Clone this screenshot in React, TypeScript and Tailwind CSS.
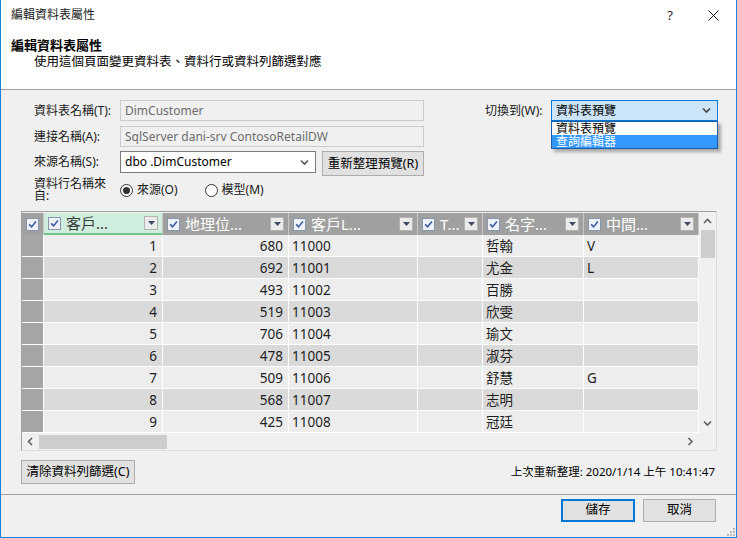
import React from 'react'

const rows = [
  ['1', '680', '11000', '', '哲翰', 'V'],
  ['2', '692', '11001', '', '尤金', 'L'],
  ['3', '493', '11002', '', '百勝', ''],
  ['4', '519', '11003', '', '欣雯', ''],
  ['5', '706', '11004', '', '瑜文', ''],
  ['6', '478', '11005', '', '淑芬', ''],
  ['7', '509', '11006', '', '舒慧', 'G'],
  ['8', '568', '11007', '', '志明', ''],
  ['9', '425', '11008', '', '冠廷', ''],
]

// column widths (incl. 1px white divider)
const cols = [
  { title: '客戶...', w: 'w-[119px]', align: 'right' },
  { title: '地理位...', w: 'w-[126px]', align: 'right' },
  { title: '客戶L...', w: 'w-[129px]', align: 'left' },
  { title: 'T...', w: 'w-[65px]', align: 'left' },
  { title: '名字...', w: 'w-[101px]', align: 'left' },
  { title: '中間...', w: 'w-[115px]', align: 'left' },
]

function Check() {
  return (
    <span className="flex h-[13px] w-[13px] shrink-0 items-center justify-center border border-[#8797ad] bg-[#eef2f8]">
      <svg width="9" height="9" viewBox="0 0 9 9">
        <path d="M1.2 4.4 L3.6 6.9 L7.9 1.6" fill="none" stroke="#3a5ca3" strokeWidth="1.6" />
      </svg>
    </span>
  )
}

function FilterBtn() {
  return (
    <span className="flex h-[14px] w-[14px] shrink-0 items-center justify-center border border-[#b3b3b3] bg-[#ebebeb]">
      <svg width="7" height="4" viewBox="0 0 7 4">
        <path d="M0 0 H7 L3.5 4 Z" fill="#3c4a66" />
      </svg>
    </span>
  )
}

function Chevron({ dir, color = '#606060' }: { dir: 'up' | 'down' | 'left' | 'right'; color?: string }) {
  const d =
    dir === 'up'
      ? 'M1 5 L4.5 1.5 L8 5'
      : dir === 'down'
      ? 'M1 1.5 L4.5 5 L8 1.5'
      : dir === 'left'
      ? 'M5 1 L1.5 4.5 L5 8'
      : 'M1.5 1 L5 4.5 L1.5 8'
  const vertical = dir === 'up' || dir === 'down'
  return (
    <svg width={vertical ? 9 : 7} height={vertical ? 7 : 9} viewBox={vertical ? '0 0 9 7' : '0 0 7 9'}>
      <path d={d} fill="none" stroke={color} strokeWidth="1.6" />
    </svg>
  )
}

function Radio({ checked }: { checked?: boolean }) {
  return (
    <span className="flex h-[13px] w-[13px] items-center justify-center rounded-full border border-[#333] bg-white">
      {checked && <span className="h-[7px] w-[7px] rounded-full bg-[#333]" />}
    </span>
  )
}

export default function App() {
  return (
    <div className="flex h-[538px] w-[737px] flex-col overflow-hidden border-x border-b border-[#1883d7] bg-[#f0f0f0] text-[12px] text-[#1a1a1a] [font-family:'Noto_Sans','Noto_Sans_CJK_TC',sans-serif]">
      {/* Title + header */}
      <div className="h-[90px] shrink-0 border-b border-[#a0a0a0] bg-white">
        <div className="flex h-[30px] items-center pl-[10px] pr-[17px]">
          <span className="leading-[14px] text-[#222]">編輯資料表屬性</span>
          <span className="ml-auto text-[13px] leading-[14px]">?</span>
          <span className="ml-[35px] flex h-[14px] w-[11px] items-center justify-center">
            <svg width="11" height="11" viewBox="0 0 11 11">
              <path d="M0.5 0.5 L10.5 10.5 M10.5 0.5 L0.5 10.5" stroke="#111" strokeWidth="1" />
            </svg>
          </span>
        </div>
        <div className="mt-[7px] pl-[10px] text-[13px] font-bold leading-[16px] text-black">編輯資料表屬性</div>
        <div className="mt-[1px] pl-[33px] text-[12.5px] leading-[16px] text-black">
          使用這個頁面變更資料表、資料行或資料列篩選對應
        </div>
      </div>

      {/* Body */}
      <div className="h-[404px] shrink-0 pl-[20px] pr-[21px] pt-[10px]">
        <div className="pl-[13px]">
          <div className="flex h-[21px] items-center">
            <span className="w-[86px] shrink-0 leading-[14px]">資料表名稱(T):</span>
            <div className="flex h-[21px] w-[304px] shrink-0 items-center border border-[#cccccc] bg-[#f0f0f0] pl-[4px] text-[#6d6d6d]">
              DimCustomer
            </div>
            <span className="ml-[61px] w-[66px] shrink-0 leading-[14px]">切換到(W):</span>
            <div className="relative flex h-[21px] w-[167px] shrink-0 items-center border border-[#0078d7] bg-[#cce4f7] pl-[4px] pr-[6px]">
              <span className="leading-[14px] text-black">資料表預覽</span>
              <span className="ml-auto">
                <Chevron dir="down" color="#444" />
              </span>
              <div className="absolute left-[-1px] top-[20px] z-10 w-[167px] border border-[#1c5fa8] bg-white shadow-[3px_3px_3px_rgba(0,0,0,0.3)]">
                <div className="h-[13px] pl-[4px] leading-[13px] text-black">資料表預覽</div>
                <div className="h-[13px] bg-[#3399ff] pl-[4px] leading-[13px] text-white">查詢編輯器</div>
              </div>
            </div>
          </div>

          <div className="mt-[5px] flex h-[21px] items-center">
            <span className="w-[86px] shrink-0 leading-[14px]">連接名稱(A):</span>
            <div className="flex h-[21px] w-[304px] items-center border border-[#cccccc] bg-[#f0f0f0] pl-[4px] text-[#6d6d6d]">
              SqlServer dani-srv ContosoRetailDW
            </div>
          </div>

          <div className="mt-[4px] flex h-[25px] items-start">
            <span className="w-[86px] shrink-0 leading-[22px]">來源名稱(S):</span>
            <div className="flex h-[22px] w-[196px] items-center border border-[#7a7a7a] bg-white pl-[4px] pr-[6px] text-black">
              <span>dbo .DimCustomer</span>
              <span className="ml-auto">
                <Chevron dir="down" color="#555" />
              </span>
            </div>
            <button className="ml-[6px] h-[25px] w-[102px] border border-[#adadad] bg-[#e1e1e1] text-[12.5px] leading-[14px] text-black">
              重新整理預覽(R)
            </button>
          </div>

          <div className="mt-[2px] flex items-center">
            <span className="w-[86px] shrink-0 pr-[12px] leading-[12px]">資料行名稱來自:</span>
            <Radio checked />
            <span className="ml-[4px] leading-[14px]">來源(O)</span>
            <span className="ml-[27px]">
              <Radio />
            </span>
            <span className="ml-[4px] leading-[14px]">模型(M)</span>
          </div>
        </div>

        {/* Grid */}
        <div className="mt-[9px] flex h-[240px] w-[696px] flex-col border border-b-[#dcdcdc] border-l-[#a0a0a0] border-r-[#dcdcdc] border-t-[#a0a0a0] bg-[#f0f0f0]">
          <div className="flex h-[221px]">
            <div className="w-[677px]">
              {/* header */}
              <div className="flex h-[23px] pt-[1px]">
                <div className="flex w-[22px] items-center justify-center border-r border-[#c8c8c8] bg-[#a0a0a0]">
                  <Check />
                </div>
                {cols.map((c, i) => (
                  <div
                    key={c.title}
                    className={`flex ${c.w} items-center border-r border-[#c8c8c8] pl-[4px] pr-[4px] ${
                      i === 0 ? 'border-b-2 border-b-[#72c58f] bg-[#cfeedd] text-[#3a3a3a]' : 'bg-[#a0a0a0] text-white'
                    }`}
                  >
                    <Check />
                    <span className="ml-[5px] text-[15px] leading-[18px]">{c.title}</span>
                    <span className="ml-auto">
                      <FilterBtn />
                    </span>
                  </div>
                ))}
              </div>
              {/* rows */}
              {rows.map((r, ri) => (
                <div key={ri} className="flex h-[22px]">
                  <div className="w-[22px] border-b border-r border-white bg-[#a5a5a5]" />
                  {cols.map((c, ci) => (
                    <div
                      key={ci}
                      className={`flex ${c.w} items-center border-b border-r border-white text-[13.5px] leading-[16px] text-[#1e1e1e] ${
                        ri % 2 === 0 ? 'bg-[#ededed]' : 'bg-[#dadada]'
                      } ${c.align === 'right' ? 'justify-end pr-[5px]' : 'pl-[3px]'}`}
                    >
                      {r[ci]}
                    </div>
                  ))}
                </div>
              ))}
            </div>
            {/* vertical scrollbar */}
            <div className="flex w-[17px] flex-col items-center">
              <div className="flex h-[17px] items-center justify-center pt-[2px]">
                <Chevron dir="up" />
              </div>
              <div className="mt-[1px] h-[28px] w-[14px] bg-[#cdcdcd]" />
              <div className="mt-auto flex h-[17px] items-center justify-center pb-[2px]">
                <Chevron dir="down" />
              </div>
            </div>
          </div>
          {/* horizontal scrollbar */}
          <div className="flex h-[17px] items-center">
            <div className="flex w-[677px] items-center">
              <span className="flex w-[17px] justify-center">
                <Chevron dir="left" />
              </span>
              <div className="h-[14px] w-[128px] bg-[#cdcdcd]" />
              <span className="ml-auto flex w-[17px] justify-center">
                <Chevron dir="right" />
              </span>
            </div>
          </div>
        </div>

        <div className="mt-[9px] flex items-center">
          <button className="h-[24px] w-[114px] border border-[#adadad] bg-[#e1e1e1] text-[12.5px] leading-[14px] text-black">
            清除資料列篩選(C)
          </button>
          <span className="ml-auto text-[11.5px] leading-[14px] text-black">上次重新整理: 2020/1/14 上午 10:41:47</span>
        </div>
      </div>

      {/* Footer */}
      <div className="relative flex h-[43px] shrink-0 items-start justify-end gap-[8px] border-t border-[#a0a0a0] pr-[20px] pt-[4px]">
        <button className="h-[23px] w-[74px] border-2 border-[#0078d7] bg-[#e1e1e1] text-[12.5px] text-black">儲存</button>
        <button className="h-[23px] w-[73px] border border-[#adadad] bg-[#e1e1e1] text-[12.5px] text-black">取消</button>
        <svg className="absolute bottom-[1px] right-[1px]" width="8" height="8" viewBox="0 0 8 8">
          <rect x="6" y="0" width="2" height="2" fill="#b8b8b8" />
          <rect x="3" y="3" width="2" height="2" fill="#b8b8b8" />
          <rect x="6" y="3" width="2" height="2" fill="#b8b8b8" />
          <rect x="0" y="6" width="2" height="2" fill="#b8b8b8" />
          <rect x="3" y="6" width="2" height="2" fill="#b8b8b8" />
          <rect x="6" y="6" width="2" height="2" fill="#b8b8b8" />
        </svg>
      </div>
    </div>
  )
}
